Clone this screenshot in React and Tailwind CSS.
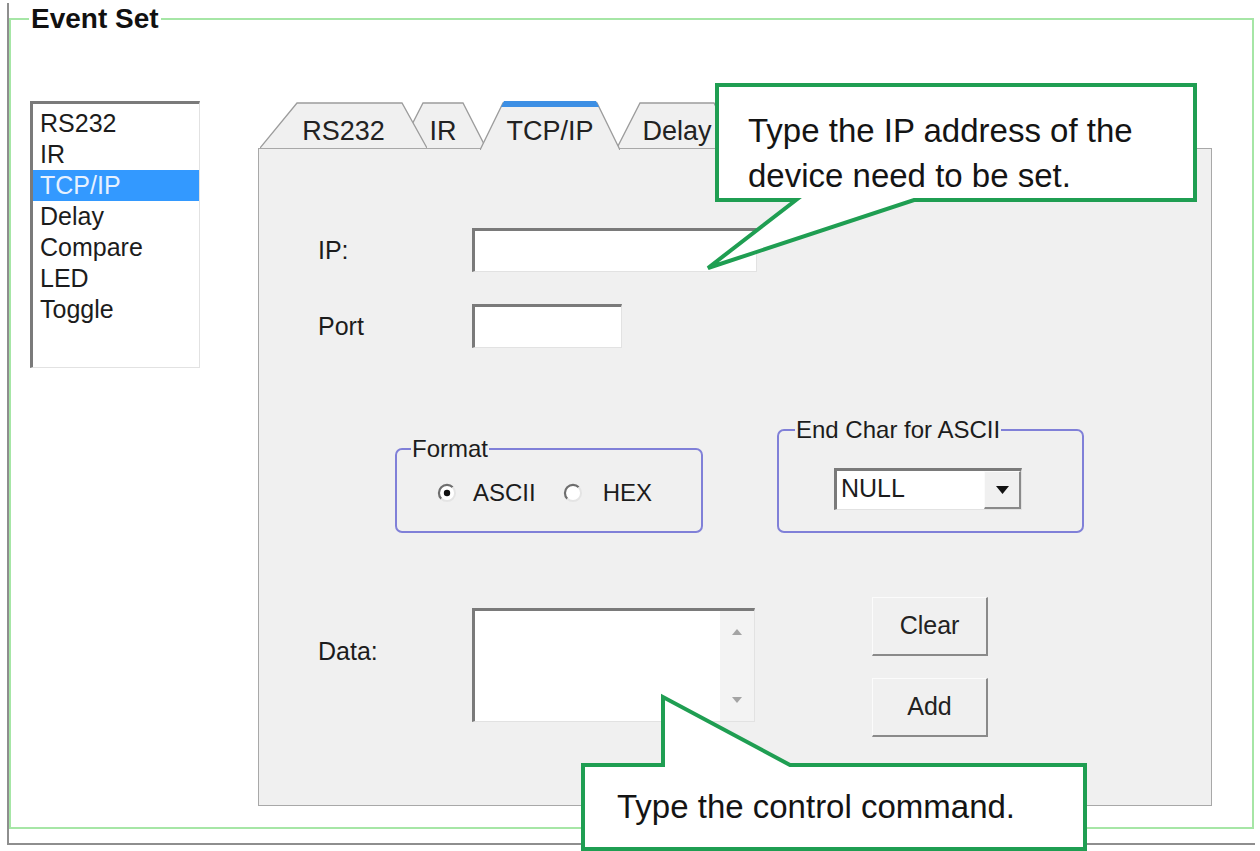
// Event Set dialog with TCP/IP tab and two callouts

const LIST_ITEMS = ["RS232", "IR", "TCP/IP", "Delay", "Compare", "LED", "Toggle"];

const sunken =
  "bg-white border-t-[3px] border-l-[3px] border-r border-b border-t-[#7a7a7a] border-l-[#7a7a7a] border-r-[#e2e2e2] border-b-[#e2e2e2]";

const raised =
  "bg-[#f0f0f0] border-t border-l border-r-2 border-b-2 border-t-[#fbfbfb] border-l-[#fbfbfb] border-r-[#8a8a8a] border-b-[#8a8a8a]";

const TABS = [
  { label: "RS232", width: 167, left: 37, right: 25, cls: "z-30 ml-[2px] w-[167px]" },
  { label: "IR", width: 86, left: 23, right: 23, cls: "z-20 -ml-[27px] w-[86px]" },
  { label: "TCP/IP", width: 140, left: 23, right: 23, cls: "z-40 -ml-[6px] w-[140px]", selected: true },
  { label: "Delay", width: 120, left: 23, right: 23, cls: "z-10 -ml-[3px] w-[120px]" },
];

const Tab = ({ label, width, left, right, cls, selected }) => {
  const h = selected ? 49 : 47;
  const outline = `0,${h} ${left},2 ${width - right},2 ${width},${h}`;
  return (
    <div className={`relative flex justify-center ${selected ? "h-[49px]" : "h-[47px]"} ${cls}`}>
      <svg className="absolute inset-0" width={width} height={h} viewBox={`0 0 ${width} ${h}`}>
        <polygon points={outline} fill="#f0f0f0" />
        <polyline points={outline} fill="none" stroke="#9c9c9c" strokeWidth="1.3" />
        {selected && (
          <path
            d={`M${left - 2} 6 L${left + 1} 0 H${width - right - 1} L${width - right + 2} 6 Z`}
            fill="#3d8fe4"
          />
        )}
      </svg>
      <span className="relative pt-[15px] text-[27px] leading-[30px] text-[#222]">{label}</span>
    </div>
  );
};

const Radio = ({ checked }) => (
  <svg width="20" height="20" viewBox="0 0 20 20">
    <circle cx="10" cy="10" r="8" fill="#fff" />
    <path d="M4.3 15.7 A8 8 0 0 1 15.7 4.3" stroke="#6e6e6e" strokeWidth="2.2" fill="none" />
    <path d="M15.7 4.3 A8 8 0 0 1 4.3 15.7" stroke="#e4e4e4" strokeWidth="2" fill="none" />
    {checked && <circle cx="10" cy="10" r="3.2" fill="#111" />}
  </svg>
);

const ListBox = () => (
  <div className={`h-[267px] w-[170px] pt-[4px] ${sunken}`}>
    {LIST_ITEMS.map(item => (
      <div
        key={item}
        className={`pl-[7px] text-[25px] leading-[31px] ${
          item === "TCP/IP" ? "bg-[#3399ff] text-[#e6f1ff]" : "text-[#1c1c1c]"
        }`}
      >
        {item}
      </div>
    ))}
  </div>
);

const Panel = () => (
  <div className="relative h-[658px] border border-[#a8a8a8] bg-[#f0f0f0] pl-[59px] pt-[79px] text-[25px] text-[#1c1c1c]">
    <div className="flex items-center">
      <span className="w-[154px] leading-[30px]">IP:</span>
      <div className={`h-[44px] w-[285px] ${sunken}`} />
    </div>

    <div className="mt-[32px] flex items-center">
      <span className="w-[154px] leading-[30px]">Port</span>
      <div className={`h-[44px] w-[150px] ${sunken}`} />
    </div>

    <div className="mt-[68px] flex items-end pl-[77px]">
      <fieldset className="h-[98px] w-[308px] min-w-0 rounded-[7px] border-2 border-[#8080d8] p-0">
        <legend className="ml-[14px] px-[1px] text-[24px] leading-[28px]">Format</legend>
        <div className="flex items-center pl-[40px] pt-[15px] text-[24px] leading-[30px]">
          <Radio checked />
          <span className="ml-[16px]">ASCII</span>
          <span className="ml-[27px] flex">
            <Radio />
          </span>
          <span className="ml-[20px]">HEX</span>
        </div>
      </fieldset>

      <fieldset className="ml-[74px] h-[117px] w-[307px] min-w-0 rounded-[7px] border-2 border-[#8080d8] p-0">
        <legend className="ml-[16px] px-[1px] text-[24px] leading-[28px]">End Char for ASCII</legend>
        <div className="pl-[55px] pt-[24px]">
          <div className={`flex h-[42px] w-[188px] items-stretch ${sunken}`}>
            <span className="flex-1 pl-[4px] text-[25px] leading-[34px]">NULL</span>
            <div className={`flex w-[37px] items-center justify-center ${raised}`}>
              <svg width="13" height="8" viewBox="0 0 13 8">
                <polygon points="0,0 13,0 6.5,8" fill="#111" />
              </svg>
            </div>
          </div>
        </div>
      </fieldset>
    </div>

    <div className="mt-[64px] flex items-start">
      <span className="mt-[39px] w-[154px] leading-[30px]">Data:</span>
      <div className={`mt-[11px] flex h-[114px] w-[283px] ${sunken}`}>
        <div className="flex-1" />
        <div className="flex w-[34px] flex-col items-center justify-between bg-[#f3f3f3] py-[18px]">
          <svg width="10" height="6" viewBox="0 0 10 6">
            <polygon points="5,0 10,6 0,6" fill="#a4a4a4" />
          </svg>
          <svg width="10" height="6" viewBox="0 0 10 6">
            <polygon points="0,0 10,0 5,6" fill="#a4a4a4" />
          </svg>
        </div>
      </div>
      <div className="ml-[117px] flex flex-col gap-[22px]">
        <button className={`h-[59px] w-[116px] text-[25px] text-[#222] ${raised}`}>Clear</button>
        <button className={`h-[59px] w-[116px] text-[25px] text-[#222] ${raised}`}>Add</button>
      </div>
    </div>
  </div>
);

const Callouts = () => (
  <>
    <svg className="pointer-events-none absolute inset-0 z-50" width="1260" height="851" viewBox="0 0 1260 851">
      <path
        d="M717 85 H1195 V200 H914 L708 268 L796 200 H717 Z"
        fill="#fff"
        stroke="#1f9e52"
        strokeWidth="4"
      />
      <path
        d="M583 765 H663 V697 L790 765 H1085 V849 H583 Z"
        fill="#fff"
        stroke="#1f9e52"
        strokeWidth="4"
      />
    </svg>
    <div className="absolute left-[748px] top-[108px] z-50 text-[33px] leading-[45px] text-[#141414]">
      Type the IP address of the
      <br />
      device need to be set.
    </div>
    <div className="absolute left-[617px] top-[784px] z-50 text-[33px] leading-[45px] text-[#141414]">
      Type the control command.
    </div>
  </>
);

export default function App() {
  return (
    <div className="relative h-[851px] w-[1260px] overflow-hidden bg-white font-['Liberation_Sans',Arial,sans-serif] text-[#1c1c1c]">
      <div className="ml-[7px] mt-[3px] flex h-[842px] w-[1248px] flex-col border-b-2 border-l-2 border-[#8e8e8e] pb-[14px]">
        <fieldset className="w-[1245px] min-w-0 flex-1 border-2 border-[#a6e6a6] p-0">
          <legend className="ml-[18px] px-[2px] text-[28px] font-bold leading-[32px] text-[#111]">
            Event Set
          </legend>
          <div className="flex items-start pl-[19px] pt-[66px]">
            <ListBox />
            <div className="ml-[58px] w-[954px]">
              <div className="relative z-10 flex h-[47px] items-start">
                {TABS.map(tab => (
                  <Tab key={tab.label} {...tab} />
                ))}
              </div>
              <Panel />
            </div>
          </div>
        </fieldset>
      </div>
      <Callouts />
    </div>
  );
}
